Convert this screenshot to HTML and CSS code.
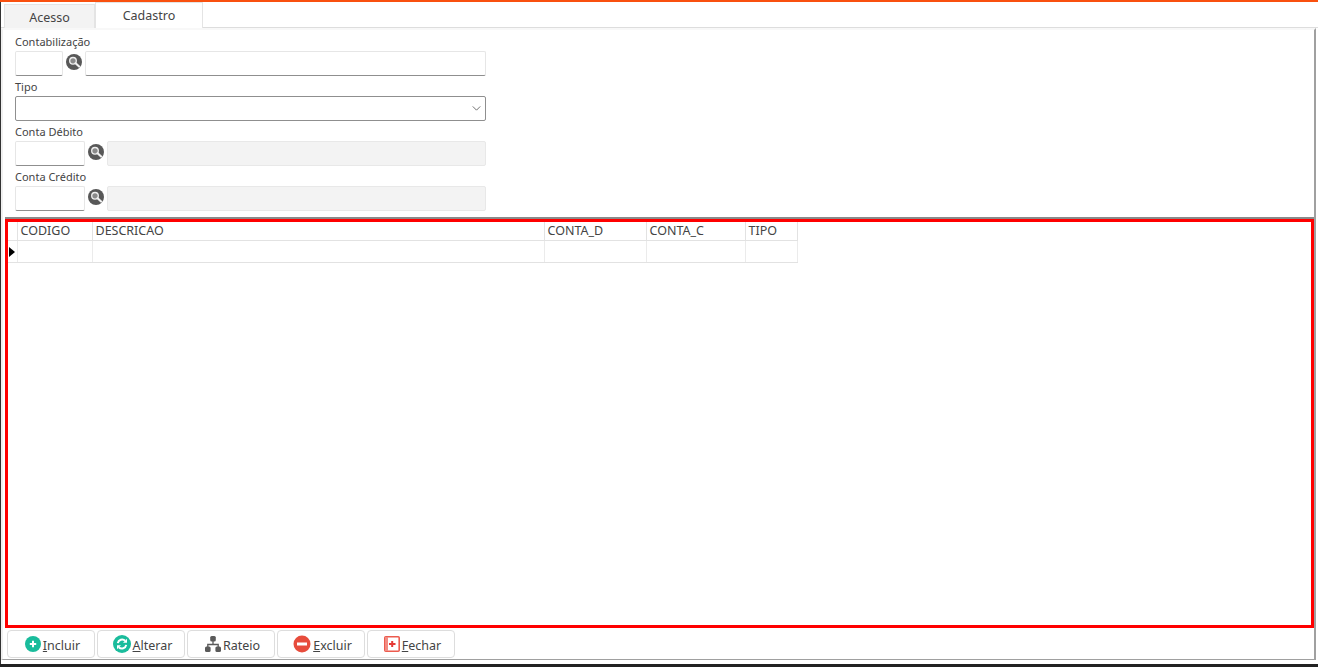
FILE: index.html
```html
<!DOCTYPE html>
<html lang="pt-BR">
<head>
  <meta charset="UTF-8" />
  <title>Cadastro</title>
  <link rel="stylesheet" href="styles.css">
</head>
<body>
  <div class="topbar"></div>
  <div class="window">
    <div class="tabs">
      <div class="tab">Acesso</div>
      <div class="tab active">Cadastro</div>
    </div>
    <div class="page">
      <div class="form">
        <label class="caption">Contabilização</label>
        <div class="row">
          <input class="field w48" type="text" />
          <svg class="lookup" viewBox="0 0 16 16"><circle cx="8" cy="8" r="8" fill="#585858"/><circle cx="7" cy="6.800" r="3.300" fill="#8A8A8A" stroke="#F0F0F0" stroke-width="1.300"/><path d="M9.600 9.300l3.500 3.200" stroke="#F0F0F0" stroke-width="2.200" stroke-linecap="round"/></svg>
          <input class="field grow" type="text" />
        </div>
        <label class="caption">Tipo</label>
        <div class="row">
          <div class="combo">
            <svg class="chevron" viewBox="0 0 10 6"><path d="M.5.5L5 5 9.500.5" fill="none" stroke="#555" stroke-width="1"/></svg>
          </div>
        </div>
        <label class="caption">Conta Débito</label>
        <div class="row">
          <input class="field w70" type="text" />
          <svg class="lookup" viewBox="0 0 16 16"><circle cx="8" cy="8" r="8" fill="#585858"/><circle cx="7" cy="6.800" r="3.300" fill="#8A8A8A" stroke="#F0F0F0" stroke-width="1.300"/><path d="M9.600 9.300l3.500 3.200" stroke="#F0F0F0" stroke-width="2.200" stroke-linecap="round"/></svg>
          <input class="field grow readonly" type="text" readonly />
        </div>
        <label class="caption">Conta Crédito</label>
        <div class="row">
          <input class="field w70" type="text" />
          <svg class="lookup" viewBox="0 0 16 16"><circle cx="8" cy="8" r="8" fill="#585858"/><circle cx="7" cy="6.800" r="3.300" fill="#8A8A8A" stroke="#F0F0F0" stroke-width="1.300"/><path d="M9.600 9.300l3.500 3.200" stroke="#F0F0F0" stroke-width="2.200" stroke-linecap="round"/></svg>
          <input class="field grow readonly" type="text" readonly />
        </div>
      </div>

      <div class="grid-wrap">
        <table class="grid">
          <colgroup>
            <col class="c-ind"><col class="c-cod"><col class="c-desc"><col class="c-d"><col class="c-c"><col class="c-tipo">
          </colgroup>
          <thead>
            <tr><th></th><th>CODIGO</th><th>DESCRICAO</th><th>CONTA_D</th><th>CONTA_C</th><th>TIPO</th></tr>
          </thead>
          <tbody>
            <tr><td class="indicator"><span class="arrow"></span></td><td></td><td></td><td></td><td></td><td></td></tr>
          </tbody>
        </table>
      </div>

      <div class="buttons">
        <button class="btn">
          <svg class="ico" viewBox="0 0 16 16"><circle cx="8" cy="8" r="8" fill="#1ABC9C"/><path d="M8 4.800v6.400M4.800 8h6.400" stroke="#fff" stroke-width="2"/></svg>
          <span><u>I</u>ncluir</span>
        </button>
        <button class="btn">
          <svg class="ico ico-lg" viewBox="0 0 18 18"><circle cx="9" cy="9" r="9" fill="#1ABC9C"/><path d="M4.800 8.200a4.400 4.400 0 0 1 7.400-2.400" fill="none" stroke="#fff" stroke-width="2"/><path d="M14 3.800v4h-4z" fill="#fff"/><path d="M13.200 9.800a4.400 4.400 0 0 1-7.400 2.400" fill="none" stroke="#fff" stroke-width="2"/><path d="M4 14.200v-4h4z" fill="#fff"/></svg>
          <span><u>A</u>lterar</span>
        </button>
        <button class="btn">
          <svg class="ico" viewBox="0 0 16 16" fill="#5A5A5A"><rect x="5.200" y="0" width="5.600" height="5.600" rx="1.500"/><rect x="0" y="10.400" width="5.600" height="5.600" rx="1.500"/><rect x="10.400" y="10.400" width="5.600" height="5.600" rx="1.500"/><path d="M8 5v3.500M2.800 11V8.500h10.400V11" fill="none" stroke="#5A5A5A" stroke-width="1.300"/></svg>
          <span>Rateio</span>
        </button>
        <button class="btn">
          <svg class="ico ico-lg" viewBox="0 0 18 18"><circle cx="9" cy="9" r="8.500" fill="#E74C3C"/><rect x="4" y="7.500" width="10" height="3" fill="#fff"/></svg>
          <span><u>E</u>xcluir</span>
        </button>
        <button class="btn">
          <svg class="ico" viewBox="0 0 16 16"><rect x=".8" y=".8" width="14.400" height="14.400" rx="1" fill="#fff" stroke="#EC5B4E" stroke-width="1.600"/><rect x="1" y="1" width="3" height="14" fill="#F28B82"/><path d="M5 8h6.500M8.200 5v6" stroke="#E53935" stroke-width="2"/></svg>
          <span><u>F</u>echar</span>
        </button>
      </div>
    </div>
  </div>
  <div class="taskbar"></div>
</body>
</html>
```

FILE: styles.css
```css
html, body {
  margin: 0;
  padding: 0;
  height: 667px;
  overflow: hidden;
  background-color: #FFFFFF;
  color: #444444;
  font-family: "Noto Sans", "Open Sans", sans-serif;
  font-size: 11px;
}
body {
  display: flex;
  flex-direction: column;
}
.topbar {
  height: 2px;
  background-color: #F9500F;
}
.window {
  flex: 1;
  display: flex;
  flex-direction: column;
  min-height: 0;
  border-left: 1px solid #333333;
  background-color: #FFFFFF;
}
.tabs {
  display: flex;
  height: 26px;
  padding: 1px 0 0 3px;
  box-sizing: border-box;
  border-bottom: 1px solid #DDDDDD;
}
.tab {
  width: 91px;
  height: 24px;
  margin-top: 1px;
  box-sizing: border-box;
  border: 1px solid #E4E4E4;
  border-bottom: none;
  background-color: #F3F3F3;
  font-size: 12.500px;
  line-height: 26px;
  text-align: center;
}
.tab.active {
  width: 108px;
  height: 26px;
  margin-top: -1px;
  background-color: #FFFFFF;
  line-height: 26px;
}
.page {
  flex: 1;
  display: flex;
  flex-direction: column;
  min-height: 0;
  margin: 0 2px 4px 0;
  padding-top: 1px;
  background-color: #FFFFFF;
  border-top: 2px solid #F8F8F8;
  border-left: 2px solid #F0F0F0;
  border-bottom: 1px solid #A0A0A0;
  border-right: 2px solid #A0A0A0;
}
.form {
  width: 471px;
  height: 186px;
  flex: none;
  padding-left: 12px;
}
.caption {
  display: block;
  height: 20px;
  line-height: 22px;
  font-size: 11px;
}
.row {
  display: flex;
  align-items: center;
  height: 25px;
}
.field {
  height: 25px;
  box-sizing: border-box;
  padding: 0 4px;
  border: 1px solid #E6E6E6;
  border-bottom-color: #8F8F8F;
  border-radius: 2px;
  background-color: #FFFFFF;
  outline: none;
}
.w48 { width: 48px; }
.w70 { width: 70px; }
.grow { flex: 1; min-width: 0; }
.field.readonly {
  background-color: #F3F3F3;
  border-color: #E8E8E8;
}
.lookup {
  width: 16px;
  height: 16px;
  margin: 0 3px;
  flex: none;
  position: relative;
  top: -2px;
}
.combo {
  flex: 1;
  height: 25px;
  box-sizing: border-box;
  display: flex;
  align-items: center;
  justify-content: flex-end;
  padding-right: 4px;
  border: 1px solid #8F8F8F;
  border-radius: 2px;
}
.chevron {
  width: 9px;
  height: 5px;
}
.grid-wrap {
  flex: 1;
  min-height: 0;
  margin: 2px 0 2px 2px;
  border: 3px solid #FF0000;
  box-shadow: 0 -2px 0 #8A8A8A;
  background-color: #FFFFFF;
}
.grid {
  border-collapse: collapse;
  table-layout: fixed;
  width: 789px;
  font-size: 12.500px;
}
.c-ind { width: 9px; }
.c-cod { width: 75px; }
.c-desc { width: 452px; }
.c-d { width: 102px; }
.c-c { width: 99px; }
.c-tipo { width: 52px; }
.grid th {
  height: 18px;
  padding: 0 0 0 3px;
  border-right: 1px solid #E2E2E2;
  border-bottom: 1px solid #E2E2E2;
  font-weight: normal;
  text-align: left;
  white-space: nowrap;
  line-height: 16px;
}
.grid td {
  height: 21px;
  padding: 0;
  border-right: 1px solid #EBEBEB;
  border-bottom: 1px solid #E2E2E2;
}
.grid td.indicator {
  vertical-align: middle;
}
.arrow {
  display: block;
  width: 0;
  height: 0;
  border-top: 5px solid transparent;
  border-bottom: 5px solid transparent;
  border-left: 6px solid #000000;
  margin-left: 1px;
}
.buttons {
  display: flex;
  gap: 2px;
  height: 29px;
  flex: none;
  padding-left: 4px;
  box-sizing: border-box;
}
.btn {
  width: 88px;
  height: 28px;
  display: flex;
  align-items: center;
  justify-content: center;
  gap: 2px;
  padding: 0 0 0 3px;
  box-sizing: border-box;
  border: 1px solid #DDDDDD;
  border-radius: 4px;
  background-color: #FFFFFF;
  color: #444444;
  font-family: inherit;
  font-size: 12.500px;
}
.btn span {
  padding-top: 2px;
}
.ico {
  width: 16px;
  height: 16px;
  flex: none;
}
.ico-lg {
  width: 18px;
  height: 18px;
}
.taskbar {
  height: 3px;
  flex: none;
  background-color: #222222;
}
```
